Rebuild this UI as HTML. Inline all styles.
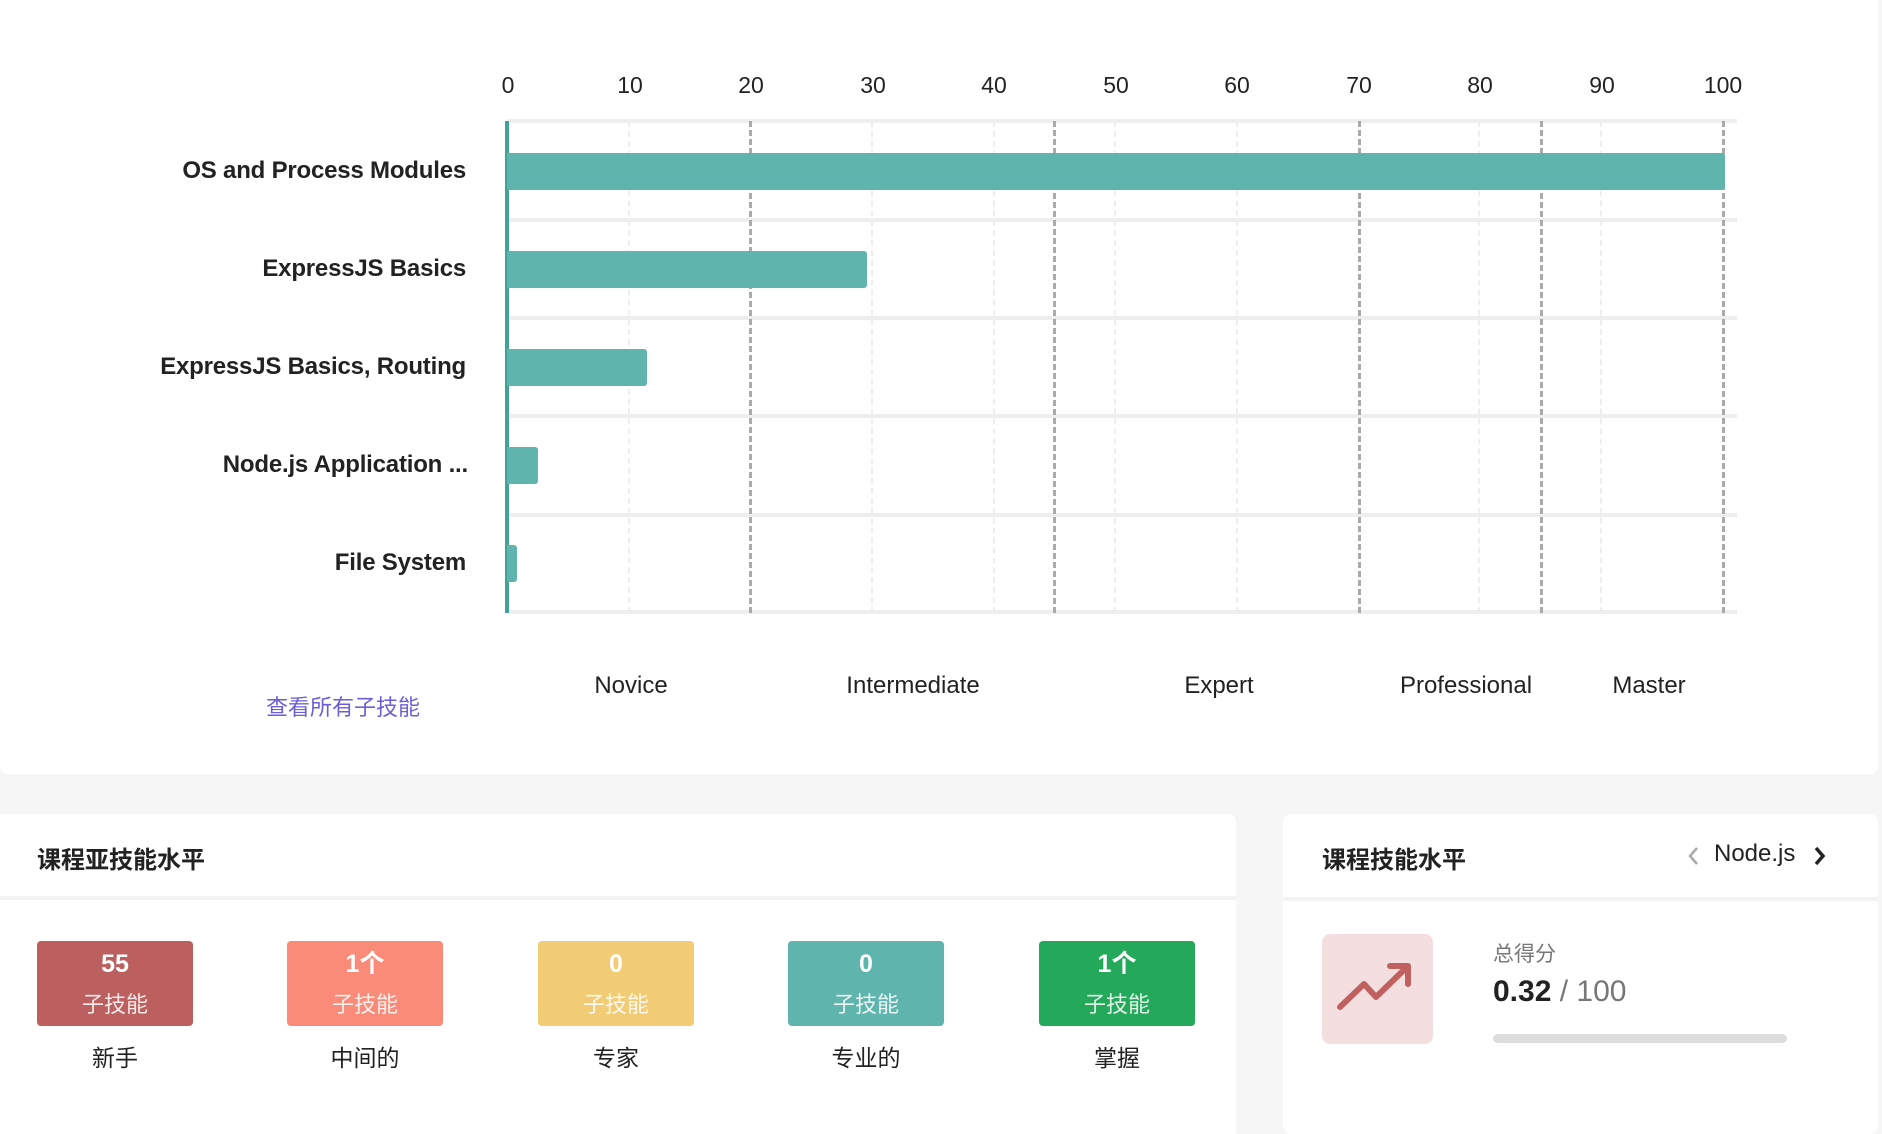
<!DOCTYPE html>
<html><head><meta charset="utf-8"><style>
*{margin:0;padding:0;box-sizing:border-box}
body{width:1882px;height:1114px;background:#f6f6f6;font-family:"Liberation Sans","Noto Sans CJK SC",sans-serif;position:relative;overflow:hidden;color:#222}
.a{position:absolute}
.card{position:absolute;background:#fff;border-radius:8px}
.tick{position:absolute;top:72px;font-size:23px;color:#222;transform:translateX(-50%)}
.lab{position:absolute;right:1416px;font-size:24px;font-weight:bold;white-space:nowrap;transform:translateY(-50%);letter-spacing:-0.2px}
.vl{position:absolute;top:121px;height:492px;width:0}
.bar{position:absolute;left:507px;height:37px;background:#5fb5ad;border-radius:0 3px 3px 0}
.hl{position:absolute;left:507px;width:1230px;height:4px;background:#eee}
.lv{position:absolute;top:672px;font-size:24px;transform:translateX(-50%);white-space:nowrap}
.box{position:absolute;top:941px;width:156px;height:85px;border-radius:4px;color:#fff;text-align:center}
.box .n{font-size:25px;font-weight:bold;margin-top:8px;line-height:30px}
.box .s{font-size:22px;margin-top:11px;line-height:30px;color:#fffd}
.bl{position:absolute;top:1039px;width:156px;text-align:center;font-size:23px}
</style></head><body>
<div class="card" style="left:0;top:0;width:1878px;height:774px;border-radius:0 0 8px 8px"></div>
<div class="tick" style="left:508px">0</div><div class="tick" style="left:630px">10</div><div class="tick" style="left:751px">20</div><div class="tick" style="left:873px">30</div><div class="tick" style="left:994px">40</div><div class="tick" style="left:1116px">50</div><div class="tick" style="left:1237px">60</div><div class="tick" style="left:1359px">70</div><div class="tick" style="left:1480px">80</div><div class="tick" style="left:1602px">90</div><div class="tick" style="left:1723px">100</div>
<div class="hl" style="top:119px"></div><div class="hl" style="top:218px"></div><div class="hl" style="top:316px"></div><div class="hl" style="top:414px"></div><div class="hl" style="top:513px"></div><div class="hl" style="top:610px"></div>
<div class="vl" style="left:628px;border-left:2px dashed #eee"></div>
<div class="vl" style="left:871px;border-left:2px dashed #eee"></div>
<div class="vl" style="left:993px;border-left:2px dashed #eee"></div>
<div class="vl" style="left:1114px;border-left:2px dashed #eee"></div>
<div class="vl" style="left:1236px;border-left:2px dashed #eee"></div>
<div class="vl" style="left:1478px;border-left:2px dashed #eee"></div>
<div class="vl" style="left:1600px;border-left:2px dashed #eee"></div>
<div class="vl" style="left:749px;border-left:3px dashed #aaa"></div>
<div class="vl" style="left:1053px;border-left:3px dashed #aaa"></div>
<div class="vl" style="left:1358px;border-left:3px dashed #aaa"></div>
<div class="vl" style="left:1540px;border-left:3px dashed #aaa"></div>
<div class="vl" style="left:1722px;border-left:3px dashed #aaa"></div>
<div class="a" style="left:505px;top:121px;width:4px;height:492px;background:#3fa39a"></div>
<div class="bar" style="top:153px;width:1218px"></div>
<div class="bar" style="top:251px;width:360px"></div>
<div class="bar" style="top:349px;width:140px"></div>
<div class="bar" style="top:447px;width:31px"></div>
<div class="bar" style="top:545px;width:10px"></div>
<div class="lab" style="top:171px">OS and Process Modules</div>
<div class="lab" style="top:269px">ExpressJS Basics</div>
<div class="lab" style="top:367px">ExpressJS Basics, Routing</div>
<div class="lab" style="top:465px;right:1414px">Node.js Application ...</div>
<div class="lab" style="top:563px">File System</div>
<div class="lv" style="left:631px">Novice</div><div class="lv" style="left:913px">Intermediate</div><div class="lv" style="left:1219px">Expert</div><div class="lv" style="left:1466px">Professional</div><div class="lv" style="left:1649px">Master</div>
<div class="a" style="left:266px;top:690px;font-size:22px;color:#6a5fd6">查看所有子技能</div>

<div class="card" style="left:0;top:814px;width:1236px;height:320px;border-radius:0 8px 0 0"></div>
<div class="a" style="left:37px;top:840px;font-size:24px;font-weight:bold">课程亚技能水平</div>
<div class="a" style="left:0;top:896px;width:1236px;height:4px;background:#f3f3f3"></div>
<div class="box" style="left:37px;background:#bb5f5f"><div class="n">55</div><div class="s">子技能</div></div>
<div class="box" style="left:287px;background:#f98b78"><div class="n">1个</div><div class="s">子技能</div></div>
<div class="box" style="left:538px;background:#f2cc74"><div class="n">0</div><div class="s">子技能</div></div>
<div class="box" style="left:788px;background:#5fb5ad"><div class="n">0</div><div class="s">子技能</div></div>
<div class="box" style="left:1039px;background:#24a85a"><div class="n">1个</div><div class="s">子技能</div></div>
<div class="bl" style="left:37px">新手</div><div class="bl" style="left:287px">中间的</div><div class="bl" style="left:538px">专家</div><div class="bl" style="left:788px">专业的</div><div class="bl" style="left:1039px">掌握</div>

<div class="card" style="left:1283px;top:814px;width:595px;height:320px"></div>
<div class="a" style="left:1322px;top:840px;font-size:24px;font-weight:bold">课程技能水平</div>
<svg class="a" style="left:1684px;top:844px" width="20" height="24"><path d="M13 4 L6 12 L13 20" fill="none" stroke="#aaa" stroke-width="2.5"/></svg>
<div class="a" style="left:1714px;top:840px;font-size:24px">Node.js</div>
<svg class="a" style="left:1810px;top:844px" width="20" height="24"><path d="M6 4 L13 12 L6 20" fill="none" stroke="#222" stroke-width="3.5"/></svg>
<div class="a" style="left:1283px;top:897px;width:595px;height:4px;background:#f3f3f3"></div>
<div class="a" style="left:1322px;top:934px;width:111px;height:110px;background:#f3dfe0;border-radius:8px"></div>
<svg class="a" style="left:1322px;top:934px" width="111" height="110"><path d="M18 73 L42 50 L54 63 L85 33 M68 32 L86 32 L86 50" fill="none" stroke="#c0605f" stroke-width="6" stroke-linecap="round" stroke-linejoin="round"/></svg>
<div class="a" style="left:1493px;top:938px;font-size:21px;color:#777">总得分</div>
<div class="a" style="left:1493px;top:975px;font-size:30px"><span style="font-weight:bold;color:#222">0.32</span><span style="color:#777"> / 100</span></div>
<div class="a" style="left:1493px;top:1034px;width:294px;height:9px;background:#ddd;border-radius:5px"></div>
</body></html>
